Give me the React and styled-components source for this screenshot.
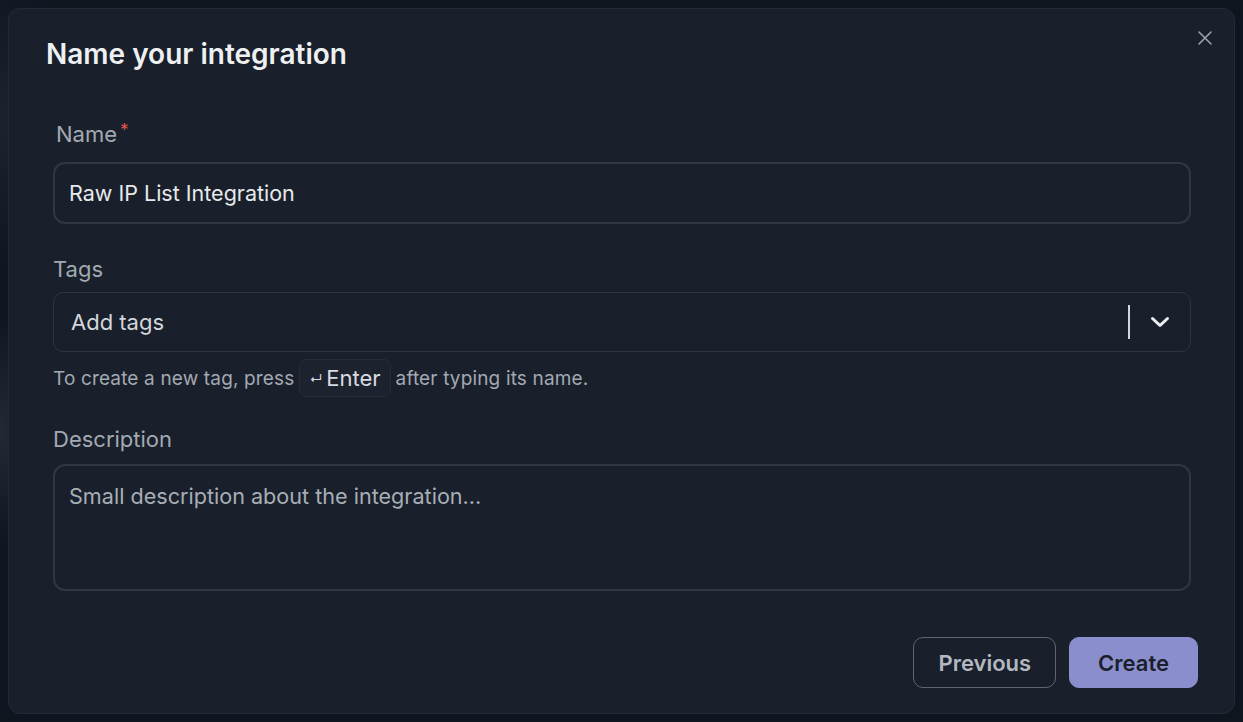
import React from "react";
import styled, { createGlobalStyle } from "styled-components";

const Global = createGlobalStyle`
  html, body { margin: 0; padding: 0; }
  body {
    background:
      radial-gradient(ellipse 60px 120px at 0px 430px, #222a36 0%, rgba(34,42,54,0) 100%),
      radial-gradient(ellipse 80px 160px at 0px 120px, #1b2330 0%, rgba(27,35,48,0) 100%),
      #0e151f;
    font-family: Inter, "Noto Sans", sans-serif;
    width: 1243px;
    height: 722px;
    overflow: hidden;
  }
  * { box-sizing: border-box; }
`;

const Backdrop = styled.div`
  padding: 8px;
  width: 1243px;
  height: 722px;
`;

const Dialog = styled.div`
  position: relative;
  width: 1227px;
  height: 706px;
  background: #19202b;
  border: 1px solid #232b37;
  border-radius: 12px;
  display: flex;
  flex-direction: column;
`;

const Header = styled.div`
  padding: 28px 37px 0;
`;

const Title = styled.h2`
  margin: 0;
  font-size: 28px;
  line-height: 34px;
  font-weight: 600;
  color: #eef0f2;
`;

const CloseButton = styled.button`
  position: absolute;
  top: 13px;
  right: 13px;
  width: 32px;
  height: 32px;
  border: none;
  background: transparent;
  padding: 0;
  display: flex;
  align-items: center;
  justify-content: center;
  cursor: pointer;
`;

const Body = styled.div`
  padding: 0 43px 0 44px;
  display: flex;
  flex-direction: column;
`;

const Label = styled.label`
  display: block;
  font-size: 22px;
  line-height: 26px;
  color: #a3a9b2;
  margin-top: ${(p) => p.$top}px;
  margin-bottom: ${(p) => p.$bottom}px;
  padding-left: ${(p) => p.$indent || 0}px;
`;

const Required = styled.span`
  color: #e5534b;
  font-size: 17px;
  vertical-align: top;
  margin-left: 3px;
  position: relative;
  top: -4px;
`;

const TextInput = styled.div`
  height: 62px;
  border: 2px solid #2e3744;
  border-radius: 12px;
  display: flex;
  align-items: center;
  padding: 0 14px;
  font-size: 21.5px;
  color: #e7e9ec;
`;

const Select = styled.div`
  height: 60px;
  border: 1px solid #2c3542;
  border-radius: 10px;
  display: flex;
  align-items: center;
  padding: 0 20px 0 17px;
  font-size: 22px;
  color: #d3d7dc;
`;

const SelectValue = styled.span`
  flex: 1;
`;

const Divider = styled.span`
  width: 2px;
  height: 34px;
  background: #d4d6da;
  margin-right: 20px;
`;

const Helper = styled.div`
  margin-top: 7px;
  display: flex;
  align-items: center;
  font-size: 19px;
  letter-spacing: 0.15px;
  color: #a3a9b2;
  gap: 5px;
`;

const Kbd = styled.span`
  display: inline-flex;
  align-items: center;
  height: 38px;
  padding: 0 9px;
  border: 1px solid #252d38;
  background: #1c232e;
  border-radius: 7px;
  font-size: 22px;
  letter-spacing: 0;
  color: #d8dce1;
  gap: 4px;
`;

const KbdArrow = styled.span`
  font-size: 13px;
  line-height: 1;
  margin-top: 3px;
`;

const TextArea = styled.div`
  height: 127px;
  border: 2px solid #2e3744;
  border-radius: 12px;
  padding: 17px 14px;
  font-size: 21.6px;
  line-height: 27px;
  color: #a8aeb6;
`;

const Footer = styled.div`
  margin-top: auto;
  padding: 0 36px 25px;
  display: flex;
  justify-content: flex-end;
  gap: 13px;
`;

const Button = styled.button`
  height: 51px;
  padding: 0 ${(p) => (p.$primary ? 28 : 24)}px;
  border-radius: 10px;
  font-family: Inter, "Noto Sans", sans-serif;
  font-size: 22px;
  font-weight: 600;
  border: 1px solid ${(p) => (p.$primary ? "#8c90cf" : "#5f6672")};
  background: ${(p) => (p.$primary ? "#8a8ecd" : "transparent")};
  color: ${(p) => (p.$primary ? "#1a1f2b" : "#b3b8c0")};
  cursor: pointer;
`;

export default function App() {
  return (
    <>
      <Global />
      <Backdrop>
        <Dialog>
          <Header>
            <Title>Name your integration</Title>
          </Header>
          <CloseButton aria-label="Close">
            <svg width="16" height="16" viewBox="0 0 16 16" fill="none">
              <path d="M2 2L14 14M14 2L2 14" stroke="#9ca2ab" strokeWidth="1.6" strokeLinecap="round" />
            </svg>
          </CloseButton>
          <Body>
            <Label $top={50} $bottom={15} $indent={3}>
              Name<Required>*</Required>
            </Label>
            <TextInput>Raw IP List Integration</TextInput>
            <Label $top={32} $bottom={10}>Tags</Label>
            <Select>
              <SelectValue>Add tags</SelectValue>
              <Divider />
              <svg width="20" height="12" viewBox="0 0 20 12" fill="none">
                <path d="M2.5 2.5L10 9.5L17.5 2.5" stroke="#eef0f3" strokeWidth="3" strokeLinecap="round" strokeLinejoin="round" />
              </svg>
            </Select>
            <Helper>
              <span>To create a new tag, press</span>
              <Kbd>
                <KbdArrow>↵</KbdArrow>Enter
              </Kbd>
              <span>after typing its name.</span>
            </Helper>
            <Label $top={29} $bottom={12}>Description</Label>
            <TextArea>Small description about the integration...</TextArea>
          </Body>
          <Footer>
            <Button>Previous</Button>
            <Button $primary>Create</Button>
          </Footer>
        </Dialog>
      </Backdrop>
    </>
  );
}
